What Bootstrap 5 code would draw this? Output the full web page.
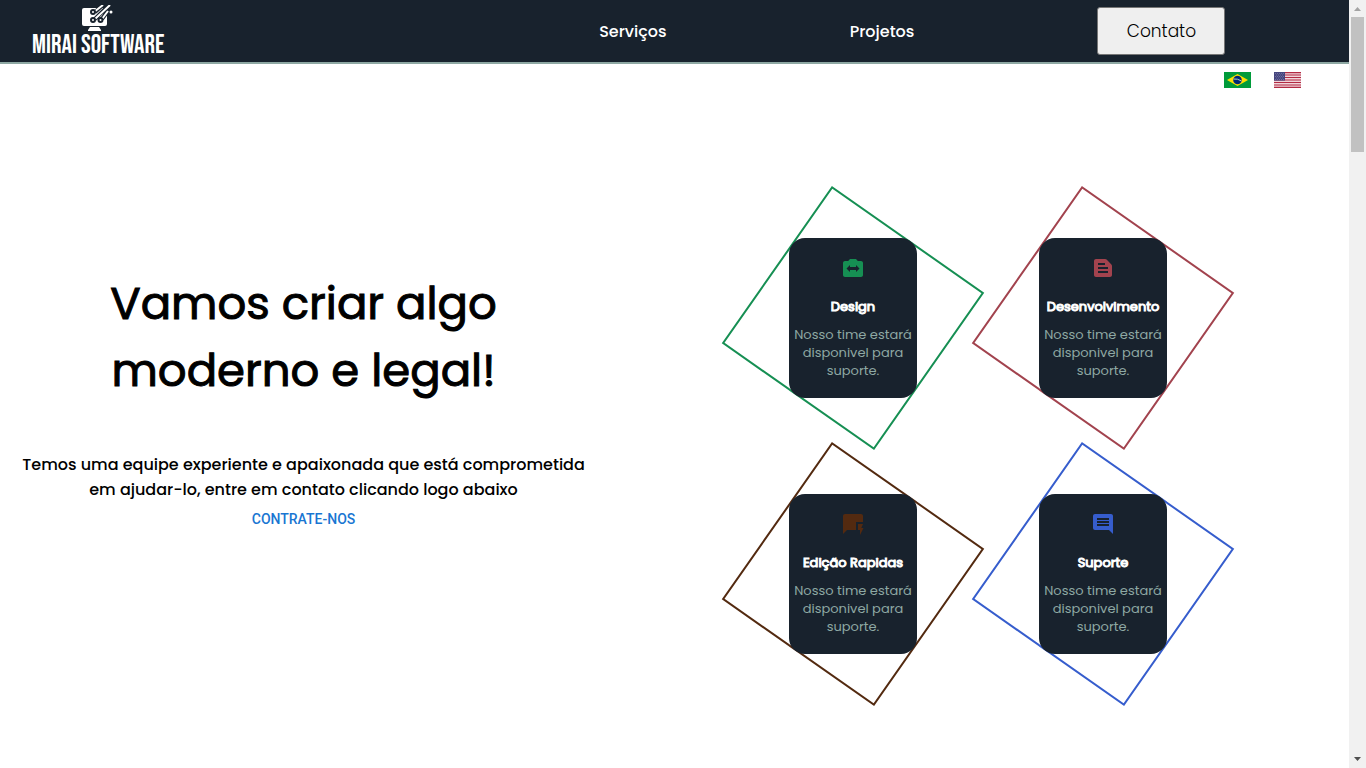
<!DOCTYPE html>
<html lang="pt-BR">
<head>
<meta charset="utf-8">
<meta name="viewport" content="width=device-width, initial-scale=1">
<title>Mirai Software</title>
<link href="https://cdn.jsdelivr.net/npm/bootstrap@5.3.0/dist/css/bootstrap.min.css" rel="stylesheet">
<style>
  body { font-family: Poppins, Inter, sans-serif; color: #000; background: #fff; }
  .site-header { background: #18222d; border-bottom: 2px solid #8ea8a3; height: 64px; }
  .logo-link { margin-left: 32px; color: #fff; text-decoration: none; }
  .logo-name { font: 400 26px/24px "Bebas Neue", "Roboto Condensed", "Liberation Sans Narrow", sans-serif; white-space: nowrap; padding-top: 2px; }
  .menu-list { width: 60%; margin-right: 32px; }
  .menu-list a { color: #fff; text-decoration: none; font-size: 16px; font-weight: 500; padding-top: 2px; }
  .contact-btn { width: 128px; height: 48px; background: #efefef; border: 1px solid #767676; border-radius: 3px; font-size: 17px; font-weight: 300; color: #000; padding: 2px 0 0; }
  .flags { padding: 8px 48px 0 0; gap: 23px; }
  .flags button, .flags svg { display: block; padding: 0; border: 0; background: none; }
  .intro { width: 45%; padding-top: 182px; }
  .intro h1 { font-size: 45px; line-height: 67px; font-weight: 400; margin: 0 96px 48px; -webkit-text-stroke: 1px #000; }
  .intro p { font-size: 16px; line-height: 25px; font-weight: 500; margin: 0 16px; }
  .hire-link { font: 500 14px/24px Roboto, sans-serif; color: #1976d2; text-decoration: none; padding: 5px 8px; display: inline-block; }
  .services { width: 55%; padding-top: 150px; display: grid; grid-template-columns: 128px 128px; gap: 96px 122px; justify-content: center; }
  .service { position: relative; width: 128px; height: 160px; color: var(--tone); }
  .service::before { content: ""; position: absolute; left: 50%; top: 50%; width: 186px; height: 192px; border: 2px solid var(--tone); transform: translate(-50%, -50%) rotate(35deg); }
  .service-body { position: relative; height: 100%; background: #18222d; border-radius: 16px; padding-top: 18px; }
  .service-body svg { display: block; margin: 0 auto; width: 24px; height: 24px; fill: currentColor; }
  .service h2 { color: #fff; font-size: 13px; line-height: 20px; font-weight: 400; -webkit-text-stroke: 1px #fff; margin: 17px 0 9px; white-space: nowrap; }
  .service p { color: #8ea8a3; font-size: 13px; line-height: 18px; margin: 0 4px; }
  .green { --tone: #168f53; } .red { --tone: #a2434e; } .brown { --tone: #532a10; } .blue { --tone: #365dcd; }
  .scroll-rail { width: 17px; background: #f1f1f1; }
  .scroll-thumb { width: 13px; height: 135px; background: #c1c1c1; }
</style>
</head>
<body>
<div class="d-flex vh-100 overflow-hidden">
  <div class="flex-grow-1">
    <header class="site-header d-flex justify-content-between align-items-center">
      <a class="logo-link d-flex flex-column align-items-center" href="#">
        <svg width="32" height="27" viewBox="0 0 32 27" aria-hidden="true">
          <path fill="#fff" d="M2 3h23v16q0 2-2 2H2q-2 0-2-2V5q0-2 2-2z"/>
          <path fill="#fff" d="M8 22h9l2 3v1H6v-1z"/>
          <g fill="none" stroke="#18222d" stroke-width="4"><path d="M13 7l9-8M13 14L28-1M20 14l8-11"/></g>
          <g fill="none" stroke="#fff" stroke-width="2"><path d="M12 7l9-7M13 14L28 0M20 14l6-8"/></g>
          <g fill="#fff" stroke="#18222d" stroke-width="2"><circle cx="11" cy="7" r="2"/><circle cx="11" cy="15" r="2"/><circle cx="18.500" cy="15" r="2"/></g>
          <circle cx="29" cy="7" r="1.500" fill="#fff"/>
        </svg>
        <span class="logo-name">MIRAI SOFTWARE</span>
      </a>
      <nav class="menu-list d-flex justify-content-around align-items-center">
        <a href="#servicos">Serviços</a>
        <a href="#projetos">Projetos</a>
        <button class="contact-btn" type="button">Contato</button>
      </nav>
    </header>
    <div class="flags d-flex justify-content-end">
      <button type="button" aria-label="Português">
        <svg width="27" height="16" viewBox="0 0 27 16"><path fill="#009b3a" d="M0 0h27v16H0z"/><path fill="#fedf00" d="M3 8l10.500-6L24 8l-10.500 6z"/><circle cx="13.500" cy="8" r="4.300" fill="#002776"/><path d="M9.500 7q4-.6 8 2" stroke="#b5cfc5" fill="none"/></svg>
      </button>
      <button type="button" aria-label="English">
        <svg width="27" height="16" viewBox="0 0 27 16"><path fill="#f0d5da" d="M0 0h27v16H0z"/><path stroke="#b22a43" stroke-width="1.200" d="M0 .6h27M0 3h27M0 5.500h27M0 8h27M0 10.500h27M0 13h27M0 15.400h27"/><path fill="#46467f" d="M0 0h11v8.600H0z"/><path stroke="#8080aa" stroke-width=".7" stroke-dasharray="1 1" d="M1 1.500h9M2 3h8M1 4.500h9M2 6h8M1 7.500h9"/></svg>
      </button>
    </div>
    <main class="d-flex align-items-start">
      <section class="intro text-center">
        <h1>Vamos criar algo moderno e legal!</h1>
        <p>Temos uma equipe experiente e apaixonada que está comprometida em ajudar-lo, entre em contato clicando logo abaixo</p>
        <a class="hire-link" href="#contato">CONTRATE-NOS</a>
      </section>
      <section class="services text-center" id="servicos">
        <article class="service green"><div class="service-body">
          <svg viewBox="0 0 24 24"><path d="M20 5h-3.200L15 3H9L7.200 5H4c-1.100 0-2 .9-2 2v12c0 1.100.9 2 2 2h16c1.100 0 2-.9 2-2V7c0-1.100-.9-2-2-2zm-5 11v-2H9v2l-3.500-3.500L9 9v2h6V9l3.500 3.500L15 16z"/></svg>
          <h2>Design</h2><p>Nosso time estará disponivel para suporte.</p></div></article>
        <article class="service red"><div class="service-body">
          <svg viewBox="0 0 24 24"><path d="M20.400 8.400l-4.800-4.800c-.4-.4-.9-.6-1.400-.6H5c-1.100 0-2 .9-2 2v14c0 1.100.9 2 2 2h14c1.100 0 2-.9 2-2V9.800c0-.5-.2-1-.6-1.400zM7 7h7v2H7V7zm10 10H7v-2h10v2zm0-4H7v-2h10v2z"/></svg>
          <h2>Desenvolvimento</h2><p>Nosso time estará disponivel para suporte.</p></div></article>
        <article class="service brown"><div class="service-body">
          <svg viewBox="0 0 24 24"><path d="M22 4c0-1.100-.9-2-2-2H4c-1.100 0-2 .9-2 2v18l4-4h9v-8h7V4zm.5 12h-2.200l1.700-4h-5v6h2v5l3.500-7z"/></svg>
          <h2>Edição Rapidas</h2><p>Nosso time estará disponivel para suporte.</p></div></article>
        <article class="service blue"><div class="service-body">
          <svg viewBox="0 0 24 24"><path d="M21.990 4c0-1.100-.89-2-1.990-2H4c-1.100 0-2 .9-2 2v12c0 1.100.9 2 2 2h14l4 4-.01-18zM18 14H6v-2h12v2zm0-3H6V9h12v2zm0-3H6V6h12v2z"/></svg>
          <h2>Suporte</h2><p>Nosso time estará disponivel para suporte.</p></div></article>
      </section>
    </main>
  </div>
  <div class="scroll-rail flex-shrink-0 d-flex flex-column align-items-center" aria-hidden="true">
    <svg width="17" height="17"><path d="M5 11h7l-3.500-4z" fill="#a3a3a3"/></svg>
    <div class="scroll-thumb"></div>
    <svg class="mt-auto" width="17" height="17"><path d="M5 6h7l-3.500 4z" fill="#505050"/></svg>
  </div>
</div>
<script src="https://cdn.jsdelivr.net/npm/bootstrap@5.3.0/dist/js/bootstrap.bundle.min.js"></script>
</body>
</html>
